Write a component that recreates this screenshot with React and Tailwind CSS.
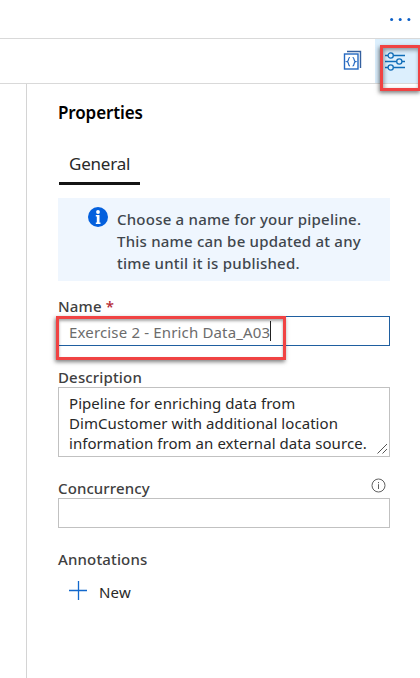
function BracesIcon() {
  return (
    <svg className="block" width="20" height="21" viewBox="0 0 20 21" fill="none" stroke="#2468c0" strokeWidth="1.4">
      <path d="M4 1.5H17.5V18" stroke="#35609f" />
      <rect x="1.5" y="4" width="13.5" height="15" />
      <path strokeWidth="1.2" d="M7 7.5C4.700 7.300 6.500 11 4.100 11.700C6.500 12.400 4.700 16 7 15.800M9.600 7.500C11.900 7.300 10.100 11 12.500 11.700C10.100 12.400 11.900 16 9.600 15.800" />
    </svg>
  );
}

function SlidersIcon() {
  return (
    <svg className="block" width="20" height="20" viewBox="0 0 20 20" fill="none" stroke="#0f6db8" strokeWidth="1.3">
      <path d="M0 3.500H3M8.500 3.500H20M0 9.500H11.500M17 9.500H20M0 15.500H3M8.500 15.500H20" />
      <circle cx="5.7" cy="3.500" r="2.600" />
      <circle cx="14.300" cy="9.500" r="2.600" />
      <circle cx="5.7" cy="15.500" r="2.600" />
    </svg>
  );
}

export default function App() {
  return (
    <div className="relative flex h-[678px] w-[420px] flex-col overflow-hidden bg-white font-['Noto_Sans',sans-serif] text-[#333]">
      <header className="flex h-[39px] shrink-0 items-center justify-end border-b border-[#d9d9d9] pr-2">
        <svg className="block" width="24" height="6" viewBox="0 0 24 6" fill="#0b5fc7">
          <circle cx="3.6" cy="3.5" r="1.5" />
          <circle cx="12.2" cy="3.5" r="1.5" />
          <circle cx="20.9" cy="3.5" r="1.5" />
        </svg>
      </header>
      <div className="flex h-[45px] shrink-0 justify-end border-b border-[#d9d9d9]">
        <div className="mr-[12px] pt-[11px]"><BracesIcon /></div>
        <div className="w-[45px] bg-[#dceffd] pt-[13px] pl-[10px]"><SlidersIcon /></div>
      </div>
      <div className="flex flex-1">
        <div className="w-[27px] border-r border-[#d4d4d4]" />
        <main className="flex w-[363px] flex-col pl-[31px] whitespace-nowrap">
          <h1 className="mt-[16px] h-[26px] text-[17px] leading-[26px] font-semibold tracking-[-0.12px] text-black">Properties</h1>
          <div className="mt-[26px] ml-px flex h-[33px] w-[81px] border-b-[3px] border-[#141414] pl-[10px] text-[17px] leading-[24px] tracking-[-0.2px] text-[#292929]">General</div>
          <div className="mt-[13px] flex h-[83px] bg-[#eff6fe] pt-[10px] pl-[30px]">
            <svg className="mt-[-1px] block" width="20" height="20" viewBox="0 0 20 20">
              <circle cx="10" cy="10" r="10" fill="#0460dd" />
              <circle cx="10" cy="5" r="1.900" fill="#fff" />
              <path d="M7.800 8H11.500V15.500H12.500V17H7.800V15.500H8.800V9.500H7.800Z" fill="#fff" />
            </svg>
            <p className="ml-[9px] text-[15px] leading-[22px] font-medium tracking-[0.22px] text-[#40464d]">
              Choose a name for your pipeline.<br />This name can be updated at any<br />time until it is published.
            </p>
          </div>
          <div className="mt-[13px] h-[22px] text-[15px] leading-[24px] font-medium tracking-[0.15px] text-[#404040]">Name <span className="text-[#b52a36]">*</span></div>
          <div className="flex h-[30px] items-center border border-[#1f5fa0] pl-[10px] text-[15px] leading-[28px] text-[#6c6c6c]">
            <span className="mt-[2px] tracking-[0.16px]">Exercise 2 - Enrich Data_A03</span><span className="h-5 w-px bg-[#222]" />
          </div>
          <div className="mt-[19px] h-[22px] text-[15px] leading-[24px] font-medium tracking-[0.15px] text-[#404040]">Description</div>
          <div className="flex h-[70px] justify-between border border-[#c1c1c1] pt-[5px] pl-[10px] text-[15px] leading-[20px] tracking-[0.06px] text-[#282828]">
            <p>Pipeline for enriching data from<br />DimCustomer with additional location<br />information from an external data source.</p>
            <svg className="mb-[2px] block shrink-0 self-end" width="12" height="11" viewBox="0 0 12 11" stroke="#555">
              <path d="M0.500 10.500L10 1M5.500 10.500L10 6" />
            </svg>
          </div>
          <div className="mt-[19px] flex h-[22px] justify-between text-[15px] leading-[24px] font-medium tracking-[0.1px] text-[#404040]">
            <span>Concurrency</span>
            <svg className="mt-[2px] mr-[4px] block" width="15" height="15" viewBox="0 0 15 15" fill="none" stroke="#606060">
              <circle cx="7.500" cy="7.500" r="6.500" /><path d="M7.500 6.200V11M7.500 4V5.200" />
            </svg>
          </div>
          <div className="h-[30px] border border-[#c1c1c1]" />
          <div className="mt-[19px] h-6 text-[15px] leading-[24px] font-medium tracking-[0.15px] text-[#404040]">Annotations</div>
          <div className="mt-[9px] flex h-6 items-center pl-[11px] text-[15px] leading-[24px] tracking-[0.2px] text-[#282828]">
            <svg className="mt-[-3px] mr-[12px] block" width="18" height="19" viewBox="0 0 18 19" stroke="#1268cc" strokeWidth="1.300"><path d="M9.500 0V19M0 9.500H18" /></svg>
            New
          </div>
        </main>
      </div>
      <div className="absolute top-[45px] left-[380px] h-[46px] w-[41px] border-[3px] border-[#f04343] shadow-[-1px_2px_4px_rgba(0,0,0,0.5),inset_1px_2px_4px_rgba(0,0,0,0.4)]" />
      <div className="absolute top-[316px] left-[56px] h-[44px] w-[230px] border-[3px] border-[#f04343] shadow-[-1px_2px_4px_rgba(0,0,0,0.5),inset_0px_2px_3px_rgba(0,0,0,0.35)]" />
    </div>
  );
}
